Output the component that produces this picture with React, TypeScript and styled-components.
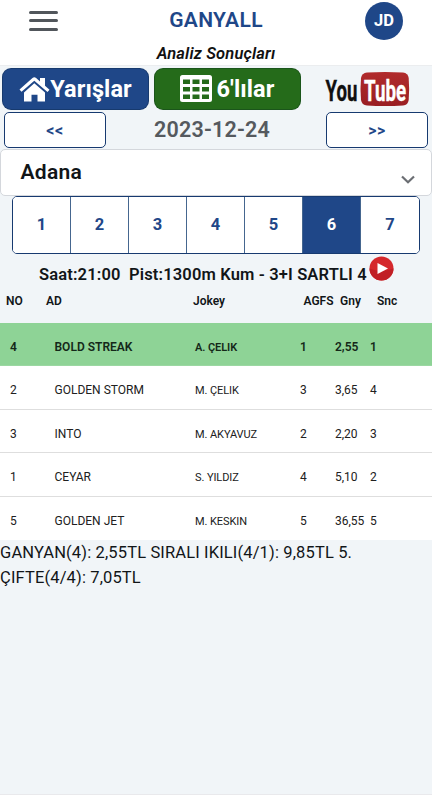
import React from "react";
import styled, { createGlobalStyle } from "styled-components";

const blue = "#1f4788";
const line = "#173a70";

const GlobalStyle = createGlobalStyle`
  *, *::before, *::after { box-sizing: border-box; }
  body { margin: 0; background: #fff; font-family: Roboto, "Liberation Sans", sans-serif; color: #111518; }
  button { font-family: inherit; margin: 0; padding: 0; cursor: pointer; }
`;

const Page = styled.div`
  width: 432px;
  height: 800px;
  display: flex;
  flex-direction: column;
  overflow: hidden;
  background: #f1f5f8;
`;

const Header = styled.header`
  flex: none;
  height: 66px;
  background: #fff;
  border-bottom: 1px solid #ebedef;
`;

const TitleBar = styled.div`
  height: 41px;
  display: grid;
  grid-template-columns: 86px 1fr 86px;
  align-items: center;
`;

const MenuButton = styled.button`
  display: flex;
  flex-direction: column;
  gap: 5.5px;
  width: 29px;
  margin-left: 29px;
  border: 0;
  background: none;
`;

const MenuLine = styled.span`
  display: block;
  height: 3px;
  border-radius: 2px;
  background: #51565b;
`;

const Brand = styled.h1`
  margin: 0;
  text-align: center;
  font-size: 21px;
  line-height: 39px;
  font-weight: 600;
  letter-spacing: 0.35px;
  color: ${blue};
`;

const Avatar = styled.div`
  width: 38px;
  height: 38px;
  margin-left: 19px;
  border-radius: 50%;
  background: ${blue};
  color: #fff;
  display: flex;
  align-items: center;
  justify-content: center;
  font-size: 16.5px;
  font-weight: 700;
`;

const Subtitle = styled.h2`
  margin: 0;
  text-align: center;
  font-size: 16.5px;
  line-height: 25px;
  font-weight: 600;
  font-style: italic;
  letter-spacing: 0.15px;
  color: #111;
`;

const Actions = styled.nav`
  flex: none;
  display: flex;
  gap: 5px;
  height: 44px;
  padding: 2px 0 0 2px;
`;

const ActionButton = styled.button<{ $color: string; $gap: number }>`
  width: 147px;
  height: 42px;
  border: 1px solid rgba(0, 20, 30, 0.25);
  border-radius: 9px;
  background: ${(p) => p.$color};
  color: #fff;
  display: flex;
  align-items: center;
  justify-content: center;
  gap: ${(p) => p.$gap}px;
  padding-bottom: 1px;
  font-size: 23.5px;
  font-weight: 700;
`;

const ActionLabel = styled.span`
  letter-spacing: 0.1px;
`;

const YouTubeLink = styled.div`
  margin-left: 19px;
  display: flex;
  align-items: center;
`;

const DateNav = styled.div`
  flex: none;
  height: 39px;
  padding: 2px 4px 1px 4px;
  display: grid;
  grid-template-columns: 102px 1fr 102px;
`;

const StepButton = styled.button`
  height: 36px;
  border: 1px solid ${line};
  border-radius: 5px;
  background: #fff;
  color: ${blue};
  font-size: 16px;
  font-weight: 700;
  letter-spacing: 0.6px;
`;

const CurrentDate = styled.time`
  padding-right: 8px;
  text-align: center;
  font-size: 21.5px;
  line-height: 35px;
  font-weight: 600;
  letter-spacing: 0.2px;
  color: #55595e;
`;

const CitySelect = styled.div`
  flex: none;
  height: 47px;
  border: 1px solid #d4d7dc;
  border-radius: 5px;
  background: #fff;
  padding: 0 16px 0 19.5px;
  display: flex;
  justify-content: space-between;
  font-size: 21px;
  line-height: 44px;
  font-weight: 600;
  letter-spacing: 0.3px;
`;

const Chevron = styled.svg`
  width: 14px;
  height: 9px;
  margin-top: 25px;
`;

const Races = styled.div`
  flex: none;
  width: 408px;
  height: 58px;
  margin: 0 12px;
  border: 1px solid ${line};
  border-radius: 5px;
  overflow: hidden;
  background: #fff;
  display: grid;
  grid-template-columns: repeat(7, 1fr);
`;

const Race = styled.button<{ $active: boolean }>`
  border: 0;
  border-right: 1px solid #45668f;
  &:last-child { border-right: 0; }
  background: ${(p) => (p.$active ? blue : "#fff")};
  color: ${(p) => (p.$active ? "#fff" : blue)};
  padding-bottom: 1px;
  font-size: 16.5px;
  font-weight: 700;
`;

const RaceInfo = styled.div`
  flex: none;
  height: 34px;
  padding: 2px 0 0 39px;
  display: flex;
  gap: 1.5px;
  font-size: 16.5px;
  line-height: 37px;
  font-weight: 600;
  letter-spacing: 0.15px;
  white-space: pre;
`;

const RaceSummary = styled.span`
  flex: none;
  width: 328px;
`;

const PlayIcon = styled.svg`
  width: 25px;
  height: 25px;
  flex: none;
`;

const HeadRow = styled.div`
  flex: none;
  height: 34.5px;
  padding-left: 6px;
  display: grid;
  grid-template-columns: 40px 147px 110.5px 36.5px 37px 1fr;
  font-size: 12px;
  line-height: 27px;
  font-weight: 600;
  letter-spacing: 0;
`;

const Row = styled.div<{ $winner: boolean }>`
  flex: none;
  height: 43.5px;
  padding-left: 10px;
  display: grid;
  grid-template-columns: 44.5px 140.5px 105px 35px 35px 1fr;
  background: ${(p) => (p.$winner ? "#8ed396" : "#fff")};
  border-bottom: 1px solid ${(p) => (p.$winner ? "#9bd7a2" : "#dedede")};
  &:last-child { border-bottom: 0; }
  font-size: 12px;
  line-height: 49px;
  font-weight: ${(p) => (p.$winner ? 600 : 400)};
  color: ${(p) => (p.$winner ? "#142819" : "#202020")};
`;

const Cell = styled.span<{ $small?: boolean }>`
  font-size: ${(p) => (p.$small ? "11px" : "inherit")};
  letter-spacing: ${(p) => (p.$small ? "-0.08px" : "0")};
  white-space: nowrap;
`;

const Table = styled.div`
  flex: none;
`;

const Payouts = styled.p`
  flex: 1;
  margin: 0;
  padding-right: 50px;
  font-size: 16.5px;
  line-height: 25px;
  letter-spacing: 0.14px;
  border-bottom: 1px solid #e9e9ec;
`;

const Footer = styled.footer`
  flex: none;
  height: 5px;
  background: #fff;
`;

const rows = [
  ["4", "BOLD STREAK", "A. ÇELIK", "1", "2,55", "1"],
  ["2", "GOLDEN STORM", "M. ÇELIK", "3", "3,65", "4"],
  ["3", "INTO", "M. AKYAVUZ", "2", "2,20", "3"],
  ["1", "CEYAR", "S. YILDIZ", "4", "5,10", "2"],
  ["5", "GOLDEN JET", "M. KESKIN", "5", "36,55", "5"],
];

const HouseIcon = () => (
  <svg width="31" height="26" viewBox="0 0 31 26" fill="#fff">
    <path d="M.5 13.500 13.500 2Q15.300.6 17.100 2L21 5.400V2h5v7.800l4.500 3.900-2 2.300L15.300 4.800 2.500 15.800Z" />
    <path d="M15.300 7.200 26 16.400V25.500H18.500v-6.700h-6v6.700H5v-9.100Z" />
  </svg>
);

const GridIcon = () => (
  <svg width="32" height="27" viewBox="0 0 32 27">
    <path
      fill="#fff"
      fillRule="evenodd"
      d="M2.5 0h27A2.5 2.5 0 0 1 32 2.5v22a2.5 2.5 0 0 1-2.5 2.5h-27A2.5 2.5 0 0 1 0 24.500v-22A2.5 2.5 0 0 1 2.500 0ZM3 4.500v4.500h7v-4.500ZM12.500 4.500v4.500h7v-4.500ZM22 4.500v4.500h7v-4.500ZM3 12v4.500h7V12ZM12.500 12v4.500h7V12ZM22 12v4.500h7V12ZM3 19.500V24h7v-4.500ZM12.500 19.500V24h7v-4.500ZM22 19.500V24h7v-4.500Z"
    />
  </svg>
);

const YouTubeLogo = () => (
  <svg width="86" height="36" viewBox="0 0 86 36" fontFamily="Roboto, sans-serif" fontWeight="700">
    <defs>
      <linearGradient id="tube" x1="0" y1="0" x2="0" y2="1">
        <stop offset="0" stopColor="#b12b2c" />
        <stop offset="1" stopColor="#991e23" />
      </linearGradient>
    </defs>
    <path
      fill="url(#tube)"
      d="M42 1.500Q60 .3 78 1.500Q83 2 83.700 7Q84.600 18 83.700 29Q83 34 78 34.500Q60 35.700 42 34.500Q36.800 34 36 29Q35 18 36 7Q36.800 2 42 1.500Z"
    />
    <text transform="translate(.5 29.500) scale(.62 1)" fontSize="30" fill="#101010" stroke="#101010" strokeWidth=".4">You</text>
    <text transform="translate(39 29.500) scale(.625 1)" fontSize="30" fill="#fff" stroke="#fff" strokeWidth=".4">Tube</text>
  </svg>
);

export default function App() {
  return (
    <Page>
      <GlobalStyle />
      <Header>
        <TitleBar>
          <MenuButton aria-label="Menü">
            <MenuLine />
            <MenuLine />
            <MenuLine />
          </MenuButton>
          <Brand>GANYALL</Brand>
          <Avatar>JD</Avatar>
        </TitleBar>
        <Subtitle>Analiz Sonuçları</Subtitle>
      </Header>
      <Actions>
        <ActionButton $color={blue} $gap={0}>
          <HouseIcon />
          <ActionLabel>Yarışlar</ActionLabel>
        </ActionButton>
        <ActionButton $color="#256b1a" $gap={4}>
          <GridIcon />
          <ActionLabel>6'lılar</ActionLabel>
        </ActionButton>
        <YouTubeLink>
          <YouTubeLogo />
        </YouTubeLink>
      </Actions>
      <DateNav>
        <StepButton>&lt;&lt;</StepButton>
        <CurrentDate>2023-12-24</CurrentDate>
        <StepButton>&gt;&gt;</StepButton>
      </DateNav>
      <CitySelect>
        <span>Adana</span>
        <Chevron viewBox="0 0 14 9" fill="none" stroke="#6b6e73" strokeWidth="2.2">
          <path d="M1 1.500 7 7.300 13 1.500" />
        </Chevron>
      </CitySelect>
      <Races>
        {[1, 2, 3, 4, 5, 6, 7].map((n) => (
          <Race key={n} $active={n === 6}>{n}</Race>
        ))}
      </Races>
      <RaceInfo>
        <RaceSummary>{"Saat:21:00  Pist:1300m Kum - 3+I SARTLI 4"}</RaceSummary>
        <PlayIcon viewBox="0 0 25 25">
          <circle cx="12.500" cy="12.500" r="12" fill="#d5282c" />
          <path d="M.5 12.500a12 12 0 0 0 24 0Q12 17 .5 12.500Z" fill="#c11f25" />
          <path d="M8.500 7v11l10.500-5.500Z" fill="#fff" />
        </PlayIcon>
      </RaceInfo>
      <HeadRow>
        {["NO", "AD", "Jokey", "AGFS", "Gny", "Snc"].map((h) => (
          <span key={h}>{h}</span>
        ))}
      </HeadRow>
      <Table>
        {rows.map((r, i) => (
          <Row key={r[1]} $winner={i === 0}>
            {r.map((c, j) => (
              <Cell key={j} $small={j === 2}>{c}</Cell>
            ))}
          </Row>
        ))}
      </Table>
      <Payouts>GANYAN(4): 2,55TL SIRALI IKILI(4/1): 9,85TL 5. ÇIFTE(4/4): 7,05TL</Payouts>
      <Footer />
    </Page>
  );
}
